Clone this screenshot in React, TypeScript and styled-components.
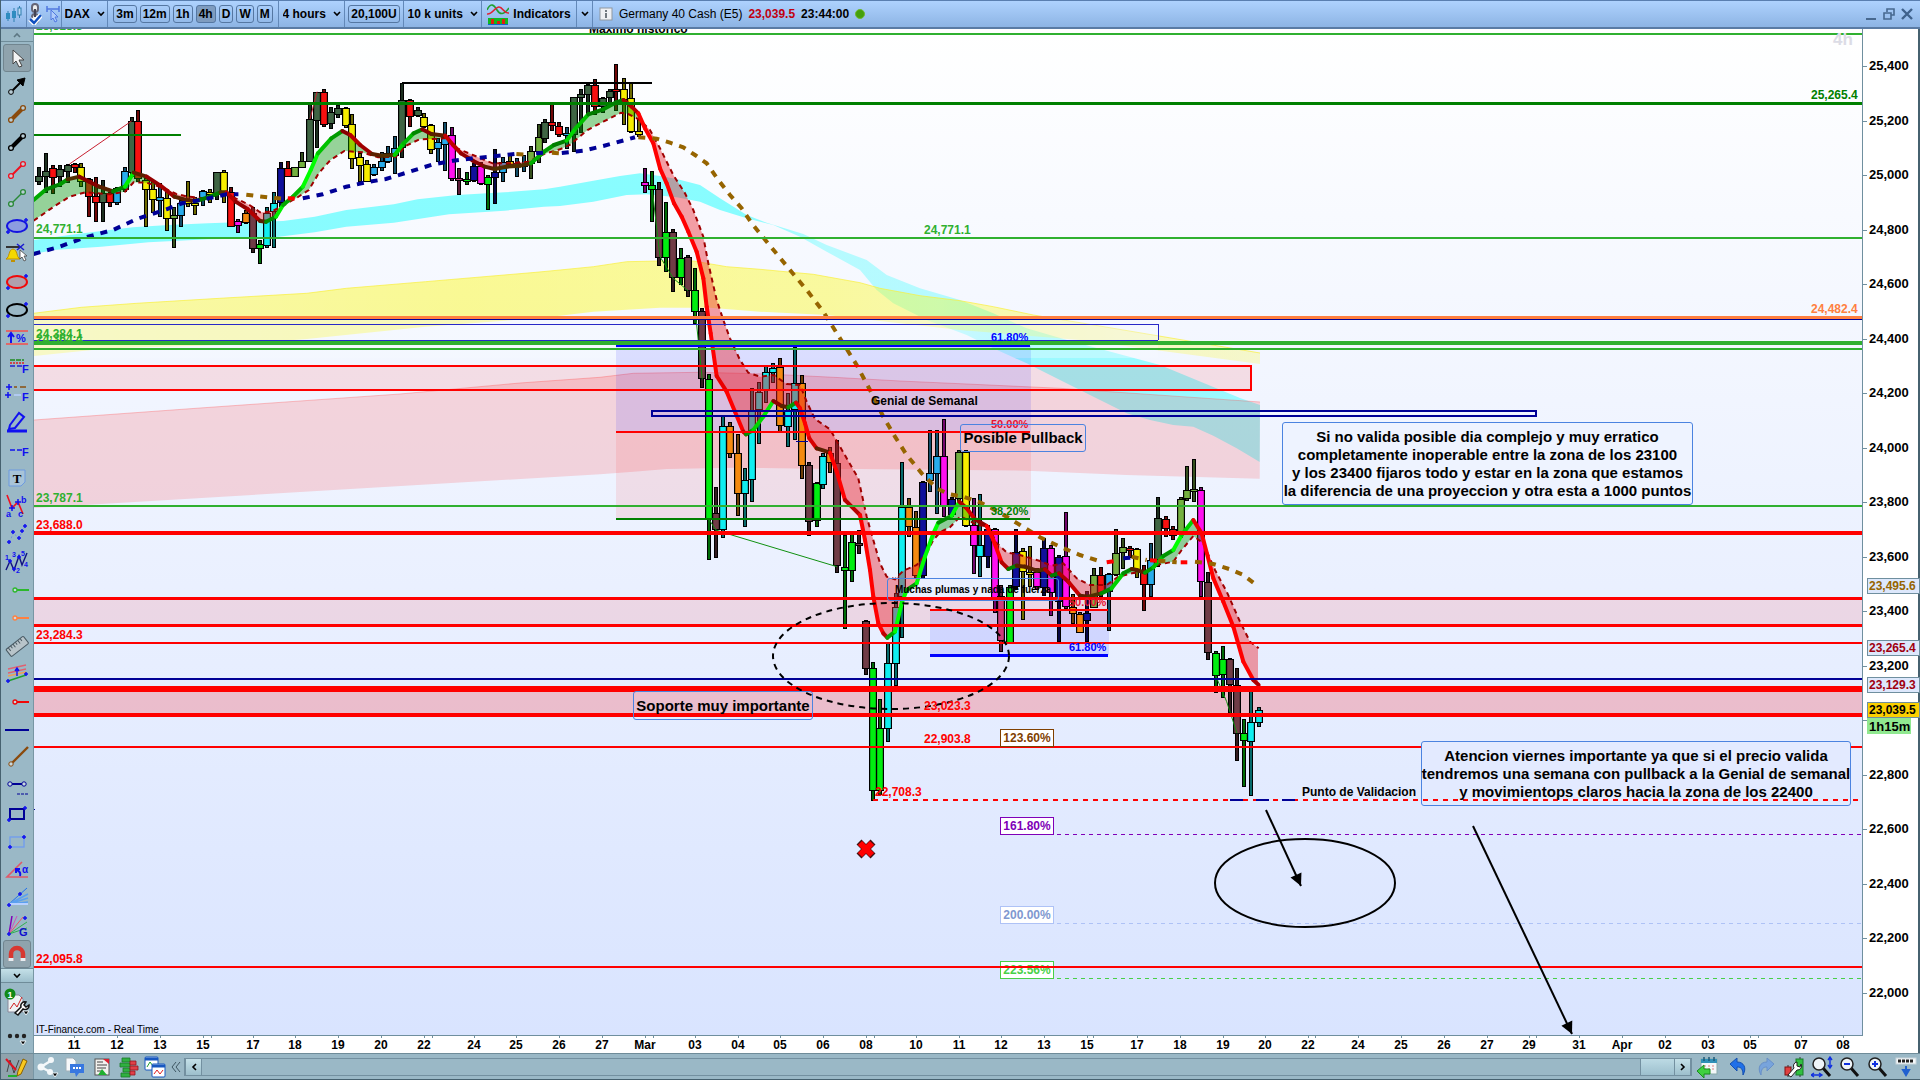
import React from "react";
import styled, { createGlobalStyle } from "styled-components";

const sans = '"Liberation Sans", Arial, Helvetica, sans-serif';

const GlobalStyle = createGlobalStyle`
  html, body, #root { height: 100%; }
  body { margin: 0; overflow: hidden; background: #9ab8c6; font-family: ${sans}; color: #000; }
  *, *::before, *::after { box-sizing: border-box; }
  button, select { font-family: inherit; color: inherit; margin: 0; }
`;

/* ---------- layout ---------- */

const App = styled.div`
  display: grid;
  grid-template-rows: 29px minmax(0, 1fr) 27px;
  height: 100vh;
  border-left: 1px solid #46616f;
`;

const TopBar = styled.header`
  display: flex;
  align-items: stretch;
  border-top: 1px solid #5a7fb0;
  border-bottom: 2px solid #5a7ba4;
  background: linear-gradient(#aed2fe, #8db4e4);
  font-size: 12px;
`;

const Cell = styled.div<{ $w: number }>`
  display: flex;
  flex: none;
  align-items: center;
  justify-content: center;
  gap: 4px;
  width: ${(p) => p.$w}px;
  border-right: 1px solid #6288b8;
  white-space: nowrap;
`;

const Frames = styled(Cell)`
  gap: 3px;
`;

const FlatButton = styled.button`
  display: flex;
  align-items: center;
  justify-content: center;
  gap: 4px;
  padding: 0;
  border: 0;
  background: none;
  font-size: 12px;
  font-weight: 700;
`;

const FrameButton = styled(FlatButton)<{ $on?: boolean }>`
  height: 18px;
  padding: 0 2px;
  border: 1px solid #5577a2;
  border-radius: 3px;
  background: ${(p) => (p.$on ? "#7f9cbf" : "transparent")};
`;

const Picker = styled.label`
  display: flex;
  align-items: center;
  gap: 6px;
`;

const PickerSelect = styled.select`
  appearance: none;
  padding: 0;
  border: 0;
  background: none;
  font-size: 12px;
  font-weight: 700;
`;

const Instrument = styled.div`
  display: flex;
  align-items: center;
  gap: 6px;
  flex: 1;
  padding-left: 6px;
  white-space: nowrap;
`;

const Quote = styled.b`
  color: #c00010;
`;

const Dot = styled.span`
  width: 10px;
  height: 10px;
  border: 1px solid #6fb82e;
  border-radius: 50%;
  background: #45a00c;
`;

const WindowButtons = styled.div`
  display: flex;
  align-items: center;
  gap: 6px;
  padding-right: 7px;
`;

const Main = styled.main`
  display: flex;
  min-height: 0;
`;

const ToolColumn = styled.nav`
  display: flex;
  flex-direction: column;
  align-items: center;
  width: 33px;
  border-right: 1px solid #7896a4;
  background: #9ab8c6;
  overflow: hidden;
`;

const StripButton = styled(FlatButton)<{ $raised?: boolean }>`
  width: 100%;
  height: ${(p) => (p.$raised ? 15 : 13)}px;
  flex: none;
  margin-bottom: 2px;
  border: solid #6f8c99;
  border-width: ${(p) => (p.$raised ? "1px 0" : "0 0 1px")};
  background: ${(p) => (p.$raised ? "linear-gradient(#c4e0e8, #9dbfcc)" : "transparent")};
`;

const ToolButton = styled(FlatButton)<{ $on?: boolean }>`
  flex: none;
  width: 28px;
  height: 28px;
  border: 1px solid ${(p) => (p.$on ? "#71858f" : "transparent")};
  border-radius: 3px;
  background: ${(p) => (p.$on ? "#8fa3ad" : "transparent")};
`;

const ExtraTool = styled(FlatButton)`
  flex: none;
  width: 28px;
  height: 34px;
`;

const ChartGrid = styled.section`
  display: grid;
  flex: 1;
  min-width: 0;
  grid-template-columns: minmax(0, 1fr) 58px;
  grid-template-rows: minmax(0, 1fr) 18px;
  background: #fff;
`;

const Canvas = styled.div`
  position: relative;
  min-height: 0;
  overflow: hidden;
  background: linear-gradient(#ffffff, #d9e4ff);
`;

const Drawing = styled.svg`
  display: block;
  width: 100%;
  height: 100%;
  min-height: 0;
  font-family: ${sans};
  font-weight: 700;
  font-size: 12px;
`;

const TimeScale = styled(Drawing)`
  grid-column: 1 / -1;
`;

const Note = styled.p<{ $x: number; $y: number; $w: number; $h: number; $size: number; $bg?: string }>`
  position: absolute;
  left: ${(p) => p.$x - 34}px;
  top: ${(p) => p.$y - 29}px;
  width: ${(p) => p.$w}px;
  height: ${(p) => p.$h}px;
  display: flex;
  align-items: center;
  justify-content: center;
  margin: 0;
  border: 1px solid #4b83e0;
  border-radius: 3px;
  background: ${(p) => p.$bg || "transparent"};
  font-size: ${(p) => p.$size}px;
  font-weight: 700;
  line-height: 18px;
  text-align: center;
  white-space: pre;
`;

const BottomBar = styled.footer`
  display: flex;
  align-items: center;
  border-top: 1px solid #6f8c99;
  border-bottom: 1px solid #46616f;
  background: #9ab8c6;
`;

const DrawToggle = styled(FlatButton)`
  width: 33px;
  height: 100%;
  border-right: 1px solid #7896a4;
  background: #8fa3ad;
`;

const BarButton = styled(FlatButton)<{ $w: number }>`
  flex: none;
  width: ${(p) => p.$w}px;
  height: 24px;
`;

const Scroll = styled.div`
  display: flex;
  flex: 1;
  justify-content: space-between;
  height: 18px;
  border: 1px solid #7390a0;
`;

const ScrollEnd = styled.div`
  display: flex;
`;

const ScrollButton = styled(FlatButton)`
  width: 17px;
  border: solid #7390a0;
  border-width: 0 1px;
  background: linear-gradient(#c4e0e8, #9dbfcc);
`;

const Thumb = styled.div`
  width: 34px;
  border-left: 1px solid #7390a0;
  background: linear-gradient(#bcdae4, #9dc0ce);
`;

/* ---------- chart data ---------- */

type P = [number, number];
type Grid = (s: string) => P[];

const grid =
  (ox: number, oy: number, sx: number, sy: number): Grid =>
  (s) =>
    s
      .trim()
      .split(/\s+/)
      .map((q) => {
        const [x, y] = q.split(",").map(Number);
        return [ox + x * sx, oy + y * sy] as P;
      });

const A = grid(30, 20, 1 / 2.529, 1 / 3);
const B = grid(560, 40, 1 / 3, 1 / 3);
const C = grid(600, 300, 1 / 3, 1 / 3);
const D = grid(860, 400, 1 / 3, 1 / 3);
const Z = grid(0, 0, 1, 1);

const palette: Record<string, string> = {
  g: "#3f6544", r: "#f81010", y: "#f6ee00", b: "#28acec", n: "#10109c",
  G: "#00ee10", m: "#ff10f0", c: "#10eef0", o: "#f48a10", w: "#703c46",
  l: "#74b040", p: "#cc3c7c",
};

const candleSets: [Grid, string][] = [
  [A, `23 440 468 487 495 g;41 400 452 472 518 g;59 435 445 475 522 r;77 435 448 472 500 g;95 432 435 455 490 g;113 430 433 445 460 r;130 428 440 487 500 y;148 475 478 532 592 r;167 470 527 549 607 r;185 480 520 549 605 g;203 515 520 549 560 r;221 500 505 550 555 b;239 442 452 510 515 b;257 290 303 458 470 g;273 270 302 478 485 r;294 475 480 510 622 y;312 480 508 540 578 y;329 490 530 542 590 b;347 510 533 598 632 y;365 562 584 598 683 l;383 540 548 588 622 b;400 482 540 552 562 y;418 530 549 558 584 y;438 510 513 535 558 b;456 508 515 524 550 y;473 455 455 525 540 g;491 450 455 515 550 y;509 502 515 622 622 r;527 597 603 618 640 m;545 570 580 608 613 o;565 560 580 688 700 w;582 660 672 688 731 G;600 562 580 677 685 c;617 517 550 575 685 c;635 425 444 550 560 n;653 422 444 472 472 r;671 440 440 472 472 l;689 397 422 445 445 l;708 252 297 427 427 g;726 215 215 302 385 g;744 208 217 315 320 r;762 260 277 312 327 g;780 255 263 284 293 g;798 262 263 318 325 y;815 283 313 418 448 y;835 400 410 437 487 y;852 420 433 487 487 y;871 433 440 465 467 b;889 395 422 445 452 b;906 378 400 427 430 b;923 348 385 408 463 b;941 190 240 385 415 g;960 238 240 292 322 r;980 262 270 288 290 g;997 280 290 320 325 y;1015 313 315 390 402 y;1033 355 365 388 425 b;1050 307 350 375 452 b;1068 322 345 478 482 m;1086 445 475 483 524 p;1105 457 478 485 495 G;1123 430 437 483 485 n;1141 425 437 493 495 m;1159 465 470 495 569 G;1177 388 455 475 553 n;1195 410 425 458 485 b;1213 405 422 435 445 y;1231 413 428 440 470 b;1249 405 432 440 455 b;1267 378 392 432 478 l;1286 313 352 395 430 l;1303 298 305 357 370 g;1321 252 305 317 332 r;1339 305 318 345 352 r;1357 322 338 345 388 b;1376 230 232 345 395 g;1394 208 222 235 340 g;1412 192 195 225 285 g;1430 178 195 260 285 r;1448 230 235 260 280 g;1466 208 212 235 250 g;1483 133 207 214 272 r;1501 175 207 240 315 y;1521 190 235 337 340 y;1539 298 332 345 350 y`],
  [B, `255 385 425 437 460 m;277 393 435 450 545 G;297 427 447 655 677 w;319 487 575 655 697 G;340 568 575 715 755 w;364 625 655 713 735 G;384 645 650 752 770 w;406 685 750 815 853 G;427 805 813 1018 1045 w`],
  [C, `328 222 237 660 780 G;348 562 640 690 775 w;370 345 377 690 715 c;391 365 377 462 475 o;415 403 458 583 647 o;435 505 540 583 682 c;457 265 330 540 605 c;477 247 275 330 432 c;498 197 215 273 308 c;519 190 203 219 250 c;541 175 200 378 395 o;565 280 330 380 440 c;585 140 250 330 420 c;607 225 250 498 538 o;628 487 495 665 708 w;650 545 550 662 680 G;670 460 467 555 568 c;690 442 460 490 520 o;711 420 488 798 820 w;736 705 802 813 988 G;757 697 725 812 845 G;777 690 730 736 763 w`],
  [D, `19 660 662 808 826 w;40 787 803 1172 1202 G;61 897 985 1172 1185 G;83 730 790 987 1025 c;107 580 620 792 858 c;126 185 322 590 713 c;148 295 320 382 410 o;169 333 380 527 533 o;190 243 247 527 538 n;210 90 218 243 277 b;231 90 167 222 342 b;252 57 168 322 350 m;277 290 297 345 350 n;298 150 155 297 310 l;319 150 155 378 380 y;341 295 375 438 523 m;361 283 435 470 530 c;383 375 388 470 505 n;404 385 388 595 640 m;423 555 588 723 755 p;449 556 560 730 733 G;468 388 457 560 568 n;490 445 452 517 660 y;510 438 517 524 562 y;532 505 517 560 570 m;553 415 445 565 587 n;574 435 445 580 647 m;597 465 470 605 725 n;618 337 468 622 628 m;640 583 620 643 672 o;661 635 642 700 700 o;682 573 640 662 725 n;703 505 525 625 625 l;724 500 525 580 590 r;746 520 522 575 692 b;768 388 458 525 527 l;789 415 440 460 508 l;811 438 443 450 475 r;832 445 447 510 533 y;852 495 515 555 632 r;874 430 480 555 592 b;895 290 355 480 500 g;919 348 357 388 412 r;939 378 388 408 420 r;962 290 297 395 415 l;981 198 270 298 302 l;1002 178 268 274 305 l;1024 262 270 547 592 m;1045 517 547 758 780 w;1067 752 760 827 878 G;1089 738 778 825 895 G;1111 775 778 855 940 w;1131 805 855 1002 1082 w;1152 957 1000 1022 1160 G;1174 870 967 1027 1187 c;1196 922 930 968 980 c`],
];

const candles = candleSets.flatMap(([g, s]) =>
  s.split(";").map((row) => {
    const [x, hi, top, bot, lo, c] = row.split(" ");
    const points = g(`${x},${hi} ${x},${top} ${x},${bot} ${x},${lo}`);
    const y = points.map((p) => Math.round(p[1]));
    return { x: Math.round(points[0][0]), hi: y[0], top: y[1], bot: y[2], lo: y[3], fill: palette[c] };
  })
);

const average: P[] = [
  ...A("9,540 41,508 77,492 95,478 125,470 150,485 175,500 210,514 240,500 262,458 295,470 330,497 365,530 395,540 420,543 450,532 482,517 497,517 520,545 550,567 582,603 597,605 622,590 640,555 665,530 690,500 710,450 728,400 762,355 790,333 810,345 835,375 865,402 890,407 922,405 945,370 970,340 992,328 1015,342 1050,347 1070,375 1090,400 1120,422 1150,440 1175,447 1205,440 1240,437 1267,430 1300,395 1325,375 1357,362 1380,325 1412,283 1450,268 1483,247 1501,240"),
  ...B("215,200 235,220 255,265 280,310 300,385 320,430 342,490 365,530 385,575 410,635 430,715 440,800 452,880 470,1008"),
  ...C("380,275 405,335 430,395 438,403 460,390 490,350 520,303 545,318 565,322 588,308 600,325 615,370 628,415 650,445 690,458 710,515 735,600 780,645 795,720 810,810 820,890 835,970 850,1000 862,1013 885,995 905,910 920,870 950,850 975,770 1000,700 1015,668 1055,647"),
  ...D("298,305 320,325 345,358 380,378 400,420 425,487 445,507 470,497 495,500 530,512 555,508 575,527 597,520 625,545 660,587 685,590 724,580 755,565 790,520 815,507 830,510 855,518 880,502 910,468 940,450 965,405 1000,360 1025,400 1060,535 1090,605 1120,680 1150,785 1180,840 1196,855"),
];

const signal: P[] = [
  ...A("9,602 60,560 100,530 140,517 200,523 240,515 262,487 295,488 340,505 370,522 400,530 440,535 480,520 497,520 520,535 555,555 582,577 610,575 640,557 675,533 705,510 730,460 760,420 795,393 840,397 880,412 925,410 950,378 985,358 1020,357 1050,355 1080,385 1120,405 1170,430 1205,430 1260,425 1300,402 1340,388 1365,375 1410,330 1450,305 1495,278"),
  ...B("205,222 240,240 270,270 300,325 340,405 375,460 400,510 430,590 445,670 470,780 490,840 510,895 540,960 565,998 600,1010 640,1005 680,1032 720,1035 740,1085"),
  ...C("645,357 690,388 720,440 775,535 800,650 820,720 840,790 860,830 885,838 910,812 950,795 980,760 1000,720 1020,697 1050,682"),
  ...D("300,350 320,358 350,375 385,378 410,430 440,457 480,465 540,483 575,497 610,490 650,535 690,555 740,555 775,530 815,520 855,515 890,495 940,485 965,450 1000,408 1030,430 1065,510 1100,575 1140,665 1170,725 1196,745"),
];

const heightAt = (line: P[], x: number) => {
  for (let i = 1; i < line.length; i++) {
    if (x <= line[i][0]) {
      const [a, b] = [line[i - 1], line[i]];
      return a[1] + ((x - a[0]) / (b[0] - a[0] || 1)) * (b[1] - a[1]);
    }
  }
  return line[line.length - 1][1];
};

const pts = (list: P[]) => list.map((p) => p.map((v) => v.toFixed(1)).join(",")).join(" ");

const clouds = (() => {
  const out: { up: boolean; points: string }[] = [];
  let top: P[] = [];
  let low: P[] = [];
  let up = true;
  const flush = () => {
    if (top.length > 1) out.push({ up, points: pts([...top, ...low.reverse()]) });
    top = [];
    low = [];
  };
  for (let x = 34; x <= 1258; x += 2) {
    const a = heightAt(average, x);
    const s = heightAt(signal, x);
    const nowUp = a < s;
    if (nowUp !== up) {
      flush();
      up = nowUp;
    }
    top.push([x, a]);
    low.push([x, s]);
  }
  flush();
  return out;
})();

const slopeColor = (a: P, b: P) => {
  const slope = (b[1] - a[1]) / (b[0] - a[0] || 1);
  const t = Math.min(1, Math.abs(slope) / 1.8);
  if (slope < -0.3) return `rgb(0, ${Math.round(95 + 160 * t)}, 0)`;
  if (slope > 0.4) return `rgb(${Math.round(90 + 165 * t)}, 0, 0)`;
  return slope > 0 ? "#5a2000" : "#503000";
};

const band = (upper: P[], lower: P[]) => pts([...upper, ...[...lower].reverse()]);

const cyanUpper = [
  ...A("9,660 100,645 180,633 260,622 350,615 450,610 560,605 640,603 720,590 800,570 920,553 980,538 1080,525 1200,517 1300,508"),
  ...B("0,440 100,422 180,408 240,400 300,408 350,417 420,435 480,475 560,525 620,548 730,582 800,615 920,660 980,705 1080,745 1200,780 1300,820 1400,865"),
  ...Z("1067,340 1160,365 1240,398 1260,405"),
];
const cyanLower = [
  ...A("9,702 60,690 180,680 300,667 450,658 600,655 720,637 800,620 920,608 1060,583 1200,572 1300,560"),
  ...B("0,498 100,485 200,465 260,463 350,472 420,485 480,510 560,535 640,555 720,590 800,635 900,690 950,750 1000,790 1100,840 1220,885 1300,925 1400,970 1500,1020 1560,1050"),
  ...D("720,0 800,40 870,60 940,75 1000,80 1060,107 1130,145 1199,186"),
];
const yellowUpper = [
  ...A("9,880 130,862 270,850 480,835 700,820 800,805 1000,785 1280,757"),
  ...B("0,690 100,680 200,665 300,663 400,663 500,680 600,688 760,703 900,728 960,745 1080,767 1200,782 1300,800 1420,825 1560,848"),
  ...Z("1260,353"),
];
const yellowLower = [
  ...A("9,1008 200,985 500,975 700,957 1000,920 1200,902"),
  ...B("0,827 100,815 300,803 450,803 600,815 800,825 980,845 1200,870 1560,900"),
  ...Z("1260,364"),
];
const pinkUpper = [...Z("34,420 200,408 400,394 520,383"), ...C("0,232 100,220 300,217 500,222 700,232 900,243 1100,252 1380,265"), ...Z("1260,402")];
const pinkLower = [...Z("34,508 300,492"), ...C("0,523 100,515 200,507 400,503 700,507"), ...D("0,207 500,212 800,225 1199,236")];

const NAVY = "#000096";
const BROWN = "#966400";
const RED = "#ff0000";

const trend: [string, P[]][] = [
  [NAVY, A("9,702 70,682 140,652 210,630 270,597 345,568 385,550 440,538 497,523 527,523")],
  [BROWN, A("547,524 600,532 640,536")],
  [RED, A("652,535 675,536")],
  [NAVY, A("690,535 740,523 800,500 850,487 900,477 960,455 1020,433 1070,422 1120,415 1180,408 1225,402")],
  [BROWN, A("1230,402 1260,404")],
  [NAVY, A("1280,400 1300,398")],
  [BROWN, A("1320,398 1340,400")],
  [NAVY, A("1345,399 1400,392 1450,378 1530,352")],
  [BROWN, [...B("235,292 290,296 330,308 370,322 405,345 440,370 475,420 510,465 545,505 575,550 620,605 690,690 740,750 790,815 840,895 890,975 930,1050 970,1130"), ...C("885,410 920,465 965,520 1010,565 1045,582 1090,590 1140,607 1170,622"), ...D("440,350 480,375 540,412 600,440 660,465 730,487")]],
  [RED, D("740,487 765,483")],
  [NAVY, D("790,475 812,473")],
  [BROWN, D("815,470 860,480")],
  [RED, D("870,481 892,482")],
  [BROWN, D("895,482 950,487")],
  [RED, D("962,487 982,487")],
  [BROWN, D("1005,485 1060,492 1110,508 1150,525 1180,548")],
];

/* y, thickness, colour */
const levels: [number, number, string][] = [
  [34, 2, "#30b030"], [103, 3, "#008000"], [238, 2, "#30b030"], [317, 3, "#ff7f40"], [319, 1, NAVY],
  [343, 4, "#30b030"], [349, 2, "#30b030"], [506, 2, "#30b030"], [533, 4, RED], [598, 3, RED],
  [625, 3, RED], [643, 2, RED], [679, 2, NAVY], [689, 6, RED], [715, 4, RED], [747, 2, RED], [967, 2, RED],
];

/* text, x, baseline, colour, size */
const labels: [string, number, number, string, number?][] = [
  ["25,518.3", 36, 30, "#30b030"],
  ["Maximo historico", 589, 33, "#000"],
  ["25,265.4", 1811, 99, "#008000"],
  ["24,771.1", 36, 233, "#30b030"],
  ["24,771.1", 924, 234, "#30b030"],
  ["24,482.4", 1811, 313, "#ff7f40"],
  ["24,364.4", 36, 343, "#30b030"],
  ["24,384.1", 36, 338, "#30b030"],
  ["61.80%", 991, 341, "#0000ff", 11],
  ["Genial de Semanal", 871, 405, "#000"],
  ["50.00%", 991, 428, "#e81030", 11],
  ["38.20%", 991, 515, "#008000", 11],
  ["23,787.1", 36, 502, "#30b030"],
  ["23,688.0", 36, 529, RED],
  ["50.00%", 1069, 606, "#e81030", 11],
  ["61.80%", 1069, 651, "#0000ff", 11],
  ["23,284.3", 36, 639, RED],
  ["23,023.3", 924, 710, RED],
  ["22,903.8", 924, 743, RED],
  ["22,708.3", 875, 796, RED],
  ["Punto de Validacion", 1302, 796, "#000"],
  ["22,095.8", 36, 963, RED],
];

/* text, top, colour, text colour */
const extensions: [string, number, string, string][] = [
  ["123.60%", 729, "#804000", "#804000"],
  ["161.80%", 817, "#8000b8", "#8000b8"],
  ["200.00%", 906, "#aec2f6", "#8098d0"],
  ["223.56%", 961, "#48d048", "#48d048"],
];

const prices = [25400, 25200, 25000, 24800, 24600, 24400, 24200, 24000, 23800, 23600, 23400, 23200, 23000, 22800, 22600, 22400, 22200, 22000];
const priceY = (p: number) => Math.round(66 + ((25400 - p) * 927) / 3400);

const days: [string, number][] = [
  ["11", 74], ["12", 117], ["13", 160], ["15", 203], ["17", 253], ["18", 295], ["19", 338], ["20", 381], ["22", 424],
  ["24", 474], ["25", 516], ["26", 559], ["27", 602], ["Mar", 645], ["03", 695], ["04", 738], ["05", 780], ["06", 823],
  ["08", 866], ["10", 916], ["11", 959], ["12", 1001], ["13", 1044], ["15", 1087], ["17", 1137], ["18", 1180], ["19", 1223],
  ["20", 1265], ["22", 1308], ["24", 1358], ["25", 1401], ["26", 1444], ["27", 1487], ["29", 1529], ["31", 1579],
  ["Apr", 1622], ["02", 1665], ["03", 1708], ["05", 1750], ["07", 1801], ["08", 1843],
];
const weekBreaks = [211, 432, 653, 874, 1093, 1315, 1536, 1758];

/* ---------- icons ---------- */

const BLUE = "#1a1ad0";

const Plus = ({ x, y, c = "#1010f0", r = 3 }: { x: number; y: number; c?: string; r?: number }) => (
  <path d={`M${x - r} ${y}h${2 * r}M${x} ${y - r}v${2 * r}`} stroke={c} strokeWidth="1.5" fill="none" />
);

const Icon = ({ children, w = 24, h = 24 }: { children: React.ReactNode; w?: number; h?: number }) => (
  <svg width={w} height={h} viewBox={`0 0 ${w} ${h}`} fill="none" aria-hidden="true" fontFamily={sans} fontWeight="700">
    {children}
  </svg>
);

const Chevron = ({ up }: { up?: boolean }) => (
  <Icon w={8} h={6}>
    <path d={up ? "M1 5l3-3 3 3" : "M1 1l3 3 3-3"} stroke={up ? "#5d7783" : "#000"} strokeWidth="1.6" />
  </Icon>
);

const Segment = ({ c, w = 2 }: { c: string; w?: number }) => (
  <Icon>
    <path d="M7 17L17 7" stroke={c} strokeWidth={w} />
    <circle cx="6" cy="18" r="2.4" stroke={c} strokeWidth="1.3" fill="#b9cdd6" />
    <circle cx="18" cy="6" r="2.4" stroke={c} strokeWidth="1.3" fill="#b9cdd6" />
  </Icon>
);

const Oval = ({ c, fill }: { c: string; fill: string }) => (
  <Icon>
    <ellipse cx="12" cy="12" rx="10" ry="6" stroke={c} strokeWidth="2" fill={fill} />
    <Plus x={3} y={18} r={2} />
    <Plus x={21} y={6} r={2} />
  </Icon>
);

const Ray = ({ c }: { c: string }) => (
  <Icon>
    <path d="M12 12h12" stroke={c} strokeWidth="2" />
    <circle cx="10" cy="12" r="2" stroke={c} strokeWidth="1.3" fill="#c8d8df" />
  </Icon>
);

const tools: [string, React.ReactNode][] = [
  ["Cursor", <Icon><path d="M8 4v14l3-3 3 6 3-1-3-6h5z" fill="#f4f4f4" stroke="#444" /></Icon>],
  ["Arrow", <Icon><path d="M6 18L16 8" stroke="#000" strokeWidth="2" /><path d="M12 6l8-2-2 8z" fill="#000" stroke="#000" /><circle cx="6" cy="18" r="2.4" stroke="#000" fill="#b9cdd6" /></Icon>],
  ["Brown segment", <Segment c="#8a4a0c" w={4} />],
  ["Black segment", <Segment c="#000" w={4} />],
  ["Red segment", <Segment c="#f01020" />],
  ["Green segment", <Segment c="#2a8a38" w={1.5} />],
  ["Blue ellipse", <Oval c="#1414e0" fill="#8c9ce0" />],
  ["Alert", <Icon><path d="M1 5h15" stroke="#333" strokeWidth="2" /><path d="M1 17c4-2 2-9 7-10 5 1 3 8 7 10z" fill="#f4d800" stroke="#c09000" /><path d="M6 19h4" stroke="#c09000" strokeWidth="2" /><path d="M12 2l7 6M19 2l-7 6" stroke={BLUE} strokeWidth="1.5" /><path d="M15 8v9l2-2 2 4 2-1-2-4h3z" fill="#fff" stroke="#444" strokeWidth=".8" /></Icon>],
  ["Red ellipse", <Oval c="#f00808" fill="#b0a0ac" />],
  ["Black ellipse", <Oval c="#000" fill="none" />],
  ["Percent", <Icon><path d="M1 5h22M1 18h22" stroke="#e06868" strokeWidth="2" /><path d="M6 17V8M3 11l3-4 3 4" stroke="#1010f0" strokeWidth="2" /><text x="11" y="16" fontSize="11" fill="#1010f0">%</text></Icon>],
  ["Fibonacci bands", <Icon><path d="M5 6h14" stroke="#1e8a1e" strokeDasharray="5 1" strokeWidth="1.4" /><path d="M5 9h14" stroke="#e02020" strokeDasharray="2 1" strokeWidth="1.4" /><path d="M5 12h14" stroke="#2020d0" strokeDasharray="5 2" strokeWidth="1.4" /><text x="17" y="19" fontSize="11" fill="#1010f0">F</text></Icon>],
  ["Fibonacci extension", <Icon><Plus x={4} y={5} /><Plus x={3} y={13} /><path d="M9 5h13" stroke="#8a5010" strokeWidth="1.5" strokeDasharray="3 3 6 2" /><path d="M9 13h7" stroke="#b8d0ff" strokeWidth="1.5" /><text x="17" y="19" fontSize="11" fill="#1010f0">F</text></Icon>],
  ["Highlighter", <Icon><path d="M5 15L14 3l5 4-9 11-6 1z" stroke="#1010f0" strokeWidth="2" /><path d="M2 21h20" stroke="#1010f0" strokeWidth="3" /></Icon>],
  ["Fibonacci level", <Icon><path d="M5 12h12" stroke="#1010f0" strokeWidth="1.5" strokeDasharray="5 2" /><text x="17" y="18" fontSize="11" fill="#1010f0">F</text></Icon>],
  ["Text", <Icon><path d="M4 4h16v12l-4 4H4z" stroke="#6d9ae0" fill="#a8c4d8" /><text x="12" y="17" fontSize="13" textAnchor="middle" fontFamily="Liberation Serif, serif" fill="#000">T</text></Icon>],
  ["ABC wave", <Icon><path d="M2 1l5 13 6-6 5 12" stroke="#f01020" strokeWidth="1.6" /><Plus x={7} y={14} /><Plus x={13} y={8} /><text x="1" y="23" fontSize="9" fill="#1010f0">a</text><text x="16" y="9" fontSize="9" fill="#1010f0">b</text><text x="13" y="23" fontSize="9" fill="#1010f0">c</text></Icon>],
  ["Pivot marks", <Icon><path d="M5 20l3-9 6 5 6-12" stroke="#7090e0" strokeDasharray="2 2" /><Plus x={4} y={20} r={2} /><Plus x={8} y={10} r={2} /><Plus x={14} y={16} r={2} /><Plus x={20} y={4} r={2} /><Plus x={17} y={9} r={2} /></Icon>],
  ["Elliott wave", <Icon><path d="M1 20l4-9 4 9 5-14 3 9 5-12" stroke="#101080" strokeWidth="1.4" /><Plus x={5} y={11} r={2} /><Plus x={14} y={7} r={2} /><Plus x={9} y={19} r={2} /><text x="0" y="10" fontSize="7" fill="#1010f0">1</text><text x="7" y="7" fontSize="7" fill="#1010f0">3</text><text x="16" y="6" fontSize="7" fill="#1010f0">5</text><text x="19" y="17" fontSize="7" fill="#1010f0">4</text><text x="11" y="23" fontSize="7" fill="#1010f0">2</text></Icon>],
  ["Green ray", <Ray c="#2cb82c" />],
  ["Orange ray", <Ray c="#ff8040" />],
  ["Ruler", <Icon><g transform="rotate(-38 12 12)"><rect x="1" y="8" width="22" height="9" rx="1" fill="#b8c4ca" stroke="#4a5a64" /><path d="M4 8v4M7 8v3M10 8v4M13 8v3M16 8v4M19 8v3" stroke="#4a5a64" /></g></Icon>],
  ["Channel", <Icon><path d="M3 7l18-4M3 11l18-4" stroke="#e06070" strokeWidth="1.3" /><path d="M3 14l18-4" stroke="#f0a050" strokeWidth="1.3" /><path d="M3 19l18-6" stroke="#20a030" strokeWidth="1.5" /><path d="M12 14V7M10 9l2-3 2 3" stroke="#1010f0" strokeWidth="1.4" /><Plus x={3} y={19} r={2} /><Plus x={21} y={12} r={2} /></Icon>],
  ["Red ray", <Ray c="#f00808" />],
  ["Horizontal line", <Icon><path d="M0 12h24" stroke={NAVY} strokeWidth="2" /></Icon>],
  ["Brown ray", <Icon><path d="M7 17L23 1" stroke="#8a4a0c" strokeWidth="2.4" /><circle cx="6" cy="18" r="2.2" stroke="#8a4a0c" fill="#c8d8df" /></Icon>],
  ["Dashed segment", <Icon><path d="M7 10h10" stroke={NAVY} strokeWidth="2" /><circle cx="5" cy="10" r="2.2" stroke={NAVY} fill="#c8d8df" /><circle cx="19" cy="10" r="2.2" stroke={NAVY} fill="#c8d8df" /><path d="M12 20h12" stroke={NAVY} strokeDasharray="3 1" /></Icon>],
  ["Navy rectangle", <Icon><rect x="5" y="7" width="14" height="10" stroke={NAVY} strokeWidth="2" /><Plus x={4} y={18} r={2} /><Plus x={20} y={6} r={2} /></Icon>],
  ["Light rectangle", <Icon><rect x="5" y="7" width="14" height="10" stroke="#6f9cf0" strokeWidth="1.3" /><Plus x={5} y={17} r={2} /><Plus x={19} y={7} r={2} /></Icon>],
  ["Angle", <Icon><path d="M17 4L2 19h21" stroke="#e05868" strokeWidth="1.6" /><path d="M15 18c1-3-1-5-3-6M11 15v-4h4" stroke="#1010f0" strokeWidth="2" /><text x="17" y="15" fontSize="10" fill="#1010f0">α</text></Icon>],
  ["Fan", <Icon><path d="M4 18L22 2" stroke="#2070f0" /><path d="M4 18L23 8M4 18l19-6M4 18l19-2" stroke="#5aa0f0" strokeWidth="1.6" /><path d="M4 18h19" stroke="#b8d0ff" strokeWidth="2" /><Plus x={4} y={19} r={2} /><Plus x={15} y={8} r={2} /></Icon>],
  ["Gann fan", <Icon><path d="M4 20L7 2" stroke="#8000b8" strokeWidth="1.5" /><path d="M4 20L12 2" stroke="#d050c0" /><path d="M4 20L18 3" stroke="#f05060" /><path d="M4 20L22 8M4 20l18-6" stroke="#30b050" /><Plus x={4} y={20} r={2} /><Plus x={20} y={4} r={2} /><text x="14" y="22" fontSize="11" fill="#1010d0">G</text></Icon>],
  ["Magnet", <Icon><path d="M6 19v-7a6 6 0 0 1 12 0v7" stroke="#d83830" strokeWidth="4.5" /><path d="M3.5 17.5h5M15.5 17.5h5" stroke="#e8eef2" strokeWidth="3" /></Icon>],
];

const Corner = ({ x, y }: { x: number; y: number }) => (
  <path d={`M${x - 3} ${y - 2}h6l-3 4z`} fill="#000" stroke="#eef4f7" strokeWidth="1" />
);

const Lens = ({ children }: { children: React.ReactNode }) => (
  <Icon w={22} h={22}>
    <path d="M12 12l7 8" stroke="#111" strokeWidth="3" />
    <circle cx="8" cy="8" r="6" fill="#eef4f8" stroke="#222" strokeWidth="1.5" />
    {children}
  </Icon>
);

/* ---------- view ---------- */

const Arrow = ({ from, to }: { from: P; to: P }) => {
  const angle = (Math.atan2(to[1] - from[1], to[0] - from[0]) * 180) / Math.PI;
  return (
    <g stroke="#000" strokeWidth="2">
      <path d={`M${from.join(" ")}L${to.join(" ")}`} />
      <path d="M0 0l-12-6v12z" stroke="none" fill="#000" transform={`translate(${to.join(" ")}) rotate(${angle})`} />
    </g>
  );
};

const Chart = () => (
  <Drawing viewBox="34 29 1828 1006" preserveAspectRatio="none" role="img" aria-label="DAX 4 hour candlestick chart">
    <defs>
      <linearGradient id="cyanFade" gradientUnits="userSpaceOnUse" x1="34" y1="0" x2="1260" y2="0">
        <stop offset="0" stopColor="#00ffff" stopOpacity=".45" />
        <stop offset=".58" stopColor="#00ffff" stopOpacity=".45" />
        <stop offset=".64" stopColor="#00ffff" stopOpacity=".26" />
        <stop offset=".74" stopColor="#00ffff" stopOpacity=".26" />
        <stop offset=".8" stopColor="#00ffff" stopOpacity=".36" />
        <stop offset="1" stopColor="#00ffff" stopOpacity=".36" />
      </linearGradient>
      <linearGradient id="yellowFade" gradientUnits="userSpaceOnUse" x1="34" y1="0" x2="1260" y2="0">
        <stop offset="0" stopColor="#fffa00" stopOpacity=".34" />
        <stop offset=".35" stopColor="#fffa00" stopOpacity=".42" />
        <stop offset=".65" stopColor="#fffa00" stopOpacity=".38" />
        <stop offset="1" stopColor="#fffa00" stopOpacity=".2" />
      </linearGradient>
    </defs>
    <polygon points={band(cyanUpper, cyanLower)} fill="url(#cyanFade)" />
    <polygon points={band(yellowUpper, yellowLower)} fill="url(#yellowFade)" />
    <polyline points={pts(yellowUpper)} fill="none" stroke="rgba(250,240,60,.7)" />
    <rect x="34" y="320" width="1124" height="38" fill="rgba(245,248,255,.35)" />
    <polygon points={band(pinkUpper, pinkLower)} fill="rgba(255,50,50,.17)" />
    <polyline points={pts(pinkUpper)} fill="none" stroke="rgba(255,90,90,.35)" />

    <rect x="34" y="366" width="1217" height="24" fill="rgba(255,0,0,.1)" />
    <rect x="616" y="346" width="415" height="86" fill="rgba(0,0,255,.1)" />
    <rect x="616" y="432" width="415" height="86" fill="rgba(255,0,0,.09)" />
    <rect x="930" y="610" width="179" height="45" fill="rgba(0,0,255,.1)" />
    <rect x="34" y="598" width="1828" height="27" fill="rgba(255,0,0,.1)" />
    <rect x="34" y="689" width="1828" height="26" fill="rgba(255,0,0,.2)" />

    <g shapeRendering="crispEdges">
      {candles.map((c) => (
        <g key={`${c.x}-${c.hi}`}>
          <rect x={c.x - 2} y={c.hi} width="4" height={c.lo - c.hi} fill="#000" />
          <rect x={c.x - 1} y={c.hi + 1} width="2" height={Math.max(0, c.lo - c.hi - 2)} fill={c.fill} opacity=".45" />
          <rect x={c.x - 4} y={c.top} width="8" height={Math.max(3, c.bot - c.top)} fill="#000" />
          <rect x={c.x - 3} y={c.top + 1} width="6" height={Math.max(1, c.bot - c.top - 2)} fill={c.fill} opacity=".8" />
          <rect x={c.x - 2} y={c.top + 1} width="4" height={Math.max(1, c.bot - c.top - 2)} fill={c.fill} />
        </g>
      ))}
    </g>

    {clouds.map((c) => (
      <polygon key={c.points} points={c.points} fill={c.up ? "rgba(0,150,0,.4)" : "rgba(235,30,40,.42)"} />
    ))}
    <polyline points={pts(signal)} fill="none" stroke="#a00000" strokeWidth="2" strokeDasharray="5 4" />
    {average.slice(1).map((p, i) => (
      <path key={i} d={`M${average[i].join(" ")}L${p.join(" ")}`} stroke={slopeColor(average[i], p)} strokeWidth="4" strokeLinecap="round" />
    ))}
    {trend.map(([c, line], i) => (
      <polyline key={i} points={pts(line)} fill="none" stroke={c} strokeWidth="4" strokeDasharray="7 7" />
    ))}

    <g fill="none" stroke="#109010">
      <polyline points={pts(B("277,450 300,650 340,715 384,752"))} />
      <polyline points={pts(B("406,815 427,1018"))} />
      <polyline points={pts(C("328,660 348,690 395,705 711,800"))} />
      <polyline points={pts(D("1067,827 1100,905 1131,1000"))} />
    </g>
    <g fill="none" stroke="#c82030">
      <polyline points={pts(A("100,432 257,303"))} />
      <polyline points={pts(A("708,297 726,215"))} />
    </g>

    <g shapeRendering="crispEdges">
      <path d="M34 135h147" stroke="#008000" strokeWidth="2" />
      <path d="M402 83h250" stroke="#000" strokeWidth="2" />
      <path d="M34 324.5h1124M1158.500 324v16M1158 340.500H34" stroke="#2828c8" />
      {levels.map(([y, h, c]) => (
        <rect key={y} x="34" y={y - Math.floor(h / 2)} width="1828" height={h} fill={c} />
      ))}
      <path d="M34 366h1217v24H34" fill="none" stroke={RED} strokeWidth="2" />
      <path d="M616 346h414" stroke="#0000ff" strokeWidth="2" />
      <path d="M616 432h414M930 610h178" stroke={RED} strokeWidth="2" />
      <path d="M616 519h414" stroke="#008000" strokeWidth="2" />
      <path d="M930 655h178" stroke="#0000ff" strokeWidth="3" />
      <path d="M652 411h884v5H652z" fill="none" stroke={NAVY} strokeWidth="2" />
      <path d="M796 441h12M34 809h1" stroke={NAVY} />
      <path d="M873 800h989" stroke={RED} strokeWidth="2" strokeDasharray="5 5" />
      <path d="M1230 800h13M1256 800h13M1282 800h13" stroke={NAVY} strokeWidth="2" />
      <path d="M1057 834.500h805" stroke="#8000b8" strokeDasharray="4 4" />
      <path d="M1057 923.500h805" stroke="#aec2f6" strokeDasharray="4 4" />
      <path d="M1057 978.500h805" stroke="#48d048" strokeDasharray="4 4" />
    </g>

    <ellipse cx="891" cy="656" rx="118" ry="53" fill="none" stroke="#000" strokeWidth="2" strokeDasharray="6 5" />
    <ellipse cx="1305" cy="883" rx="90" ry="44" fill="none" stroke="#000" strokeWidth="2" />
    <Arrow from={[1266, 810]} to={[1301, 886]} />
    <Arrow from={[1473, 826]} to={[1572, 1034]} />
    <path d="M859 842l14 14M873 842l-14 14" stroke="#401010" strokeWidth="7" />
    <path d="M860 843l12 12M872 843l-12 12" stroke={RED} strokeWidth="6" />

    {extensions.map(([t, y, c, ink]) => (
      <g key={t}>
        <rect x="1000.5" y={y + 0.5} width="53" height="17" fill="#fff" stroke={c} />
        <text x="1027" y={y + 13} fill={ink} textAnchor="middle">{t}</text>
      </g>
    ))}
    <rect x="1000" y="966" width="55" height="2" fill={RED} />
    {labels.map(([t, x, y, c, size]) => (
      <text key={t + x + y} x={x} y={y} fill={c} fontSize={size || 12}>{t}</text>
    ))}
    <text x="1833" y="45" fontSize="17" fill="#dcdce6">4h</text>
    <text x="36" y="1033" fontSize="10" fontWeight="400">IT-Finance.com - Real Time</text>
  </Drawing>
);

const PriceTag = ({ y, ink, fill, children, w = 52 }: { y: number; ink: string; fill: string; children: string; w?: number }) => (
  <g>
    <rect x="1867.5" y={y - 7.5} width={w} height="15" fill={fill} stroke="#6f8f9f" />
    <text x="1869" y={y + 4} fill={ink}>{children}</text>
  </g>
);

const PriceScale = () => (
  <Drawing viewBox="1862 29 58 1006" preserveAspectRatio="none" role="img" aria-label="Price scale">
    <path d="M1862.500 29V1035" stroke="#6f8f9f" />
    <path d="M1919 29V1035" stroke="#46616f" strokeWidth="2" />
    {prices.map((p) => (
      <g key={p}>
        <path d={`M1863 ${priceY(p) + 0.5}h4`} stroke="#6f8f9f" />
        {p !== 23000 && <text x="1869" y={priceY(p) + 4} fontSize="13">{p.toLocaleString("en-US")}</text>}
      </g>
    ))}
    <PriceTag y={586} ink={BROWN} fill="#dde8fc">23,495.6</PriceTag>
    <PriceTag y={648} ink="#a00010" fill="#dde8fc">23,265.4</PriceTag>
    <PriceTag y={685} ink="#a00010" fill="#dde8fc">23,129.3</PriceTag>
    <PriceTag y={710} ink="#000" fill="#fbd000">23,039.5</PriceTag>
    <rect x="1867" y="718" width="44" height="16" fill="#90e890" />
    <text x="1869" y="731" fontSize="13">1h15m</text>
  </Drawing>
);

const DayScale = () => (
  <TimeScale viewBox="34 1035 1886 18" preserveAspectRatio="none" role="img" aria-label="Time scale">
    <path d="M34 1035H1863" stroke="#6f8f9f" strokeWidth="2" />
    <path d="M1919 1035v18" stroke="#46616f" strokeWidth="2" />
    {days.map(([d, x]) => (
      <g key={x}>
        <path d={`M${x + 0.5} 1035v3`} stroke="#6f8f9f" />
        <text x={x} y="1049" textAnchor="middle">{d}</text>
      </g>
    ))}
    {weekBreaks.map((x) => (
      <path key={x} d={`M${x + 0.5} 1035v3`} stroke="#6f8f9f" />
    ))}
  </TimeScale>
);

const Dropdown = ({ label, value }: { label: string; value: string }) => (
  <Picker>
    <PickerSelect aria-label={label} defaultValue={value}>
      <option>{value}</option>
    </PickerSelect>
    <Chevron />
  </Picker>
);

export default function TradingWorkstation() {
  return (
    <App>
      <GlobalStyle />
      <TopBar>
        <Cell $w={26}>
          <FlatButton aria-label="Chart type">
            <Icon w={18} h={20}>
              <path d="M3 7v10M9 4v14M14.500 2v12" stroke="#2f7fae" />
              <path d="M1 9h4v6H1zM7 7h4v7H7z" fill="#2f8cc0" />
              <rect x="13" y="4" width="3" height="7" fill="#b8d8f4" stroke="#2f7fae" />
            </Icon>
          </FlatButton>
        </Cell>
        <Cell $w={35}>
          <FlatButton aria-label="Link">
            <Icon w={14} h={22}>
              <rect x="4" y="1" width="6" height="8" rx="3" stroke="#667" strokeWidth="2" fill="#eee" />
              <rect x="4" y="11" width="6" height="9" rx="3" stroke="#667" strokeWidth="2" fill="#eee" />
              <path d="M7 6v8" stroke="#445" strokeWidth="2" />
              <path d="M2 16l4 4 7-8" stroke="#fff" strokeWidth="5" />
              <path d="M2 16l4 4 7-8" stroke="#1050c0" strokeWidth="2.5" />
            </Icon>
          </FlatButton>
          <FlatButton aria-label="Select range">
            <Icon w={14} h={18}>
              <path d="M1 4h12M1 1v6M13 1v6" stroke="#5078e0" strokeWidth="1.5" />
              <path d="M5 5v10l2-2 2 4 2-1-2-4h3z" stroke="#5078e0" fill="#b0ccfa" />
            </Icon>
          </FlatButton>
        </Cell>
        <Cell $w={46}><Dropdown label="Instrument" value="DAX" /></Cell>
        <Frames $w={171}>
          {["3m", "12m", "1h", "4h", "D", "W", "M"].map((t) => (
            <FrameButton key={t} $on={t === "4h"}>{t}</FrameButton>
          ))}
        </Frames>
        <Cell $w={66}><Dropdown label="Timeframe" value="4 hours" /></Cell>
        <Cell $w={59}><FrameButton>20,100U</FrameButton></Cell>
        <Cell $w={78}><Dropdown label="Units" value="10 k units" /></Cell>
        <Cell $w={95}>
          <FlatButton>
            <Icon w={22} h={22}>
              <path d="M0 7c4-8 7-5 10 0s7 5 12-2" stroke="#20a030" strokeWidth="1.6" />
              <path d="M0 11c5 1 8-7 12-7s5 7 10 6" stroke="#e02030" strokeWidth="1.6" />
              <path d="M1 15h20v6H1z" fill="#10b820" />
              <path d="M4 16h3v5H4zM10 18h3v3h-3zM15 16h3v5h-3z" fill="#e02010" />
              <path d="M1 21.500h20" stroke="#1060d0" />
            </Icon>
            Indicators
          </FlatButton>
        </Cell>
        <Cell $w={16}><FlatButton aria-label="More indicators"><Chevron /></FlatButton></Cell>
        <Instrument>
          <Icon w={14} h={14}>
            <rect x="1" y="1" width="12" height="12" fill="#eef0f4" stroke="#9098a0" />
            <path d="M7 6v5M7 3v2" stroke="#707880" strokeWidth="2" />
          </Icon>
          <span>Germany 40 Cash (E5)</span>
          <Quote>23,039.5</Quote>
          <b>23:44:00</b>
          <Dot />
        </Instrument>
        <WindowButtons>
          <FlatButton aria-label="Minimise"><Icon w={12} h={12}><path d="M1 11h10" stroke="#47688f" strokeWidth="2" /></Icon></FlatButton>
          <FlatButton aria-label="Restore"><Icon w={12} h={12}><path d="M4 4V1h7v6H8M1 5h7v6H1z" stroke="#47688f" strokeWidth="1.6" /></Icon></FlatButton>
          <FlatButton aria-label="Close"><Icon w={12} h={12}><path d="M1 1l10 10M11 1L1 11" stroke="#3f628c" strokeWidth="2.4" /></Icon></FlatButton>
        </WindowButtons>
      </TopBar>

      <Main>
        <ToolColumn>
          <StripButton aria-label="Scroll tools up"><Chevron up /></StripButton>
          {tools.map(([name, icon]) => (
            <ToolButton key={name} aria-label={name} $on={name === "Cursor" || name === "Magnet"}>{icon}</ToolButton>
          ))}
          <StripButton $raised aria-label="Scroll tools down"><Chevron /></StripButton>
          <ExtraTool aria-label="Settings">
            <Icon w={26} h={28}>
              <path d="M4 7h11l4 4v13H4z" fill="#eef2f4" stroke="#889" />
              <path d="M6 21l4-6 3 4 5-10" stroke="#d02020" />
              <path d="M11 25l6-6a4 4 0 0 1 5-5l-2 3 2 2 3-2a4 4 0 0 1-6 4l-5 6z" fill="#fff" stroke="#111" strokeWidth="1.5" />
              <circle cx="6" cy="6" r="5.500" fill="#108a18" />
              <text x="6" y="9.500" fontSize="9" textAnchor="middle" fill="#fff">1</text>
              <Corner x={22} y={25} />
            </Icon>
          </ExtraTool>
          <ExtraTool aria-label="More tools">
            <Icon w={26} h={20}>
              <circle cx="6" cy="10" r="2.200" fill="#222" />
              <circle cx="13" cy="10" r="2.200" fill="#222" />
              <circle cx="20" cy="10" r="2.200" fill="#222" />
              <Corner x={19} y={17} />
            </Icon>
          </ExtraTool>
        </ToolColumn>

        <ChartGrid>
          <Canvas>
            <Chart />
            <Note $x={960} $y={424} $w={126} $h={28} $size={15}>Posible Pullback</Note>
            <Note $x={887} $y={578} $w={172} $h={23} $size={10}>Muchas plumas y nada de fuerza</Note>
            <Note $x={633} $y={691} $w={180} $h={29} $size={15}>Soporte muy importante</Note>
            <Note $x={1282} $y={422} $w={411} $h={83} $size={15} $bg="#eef3ff">
              {"Si no valida posible dia complejo y muy erratico\ncompletamente inoperable entre la zona de los 23100\ny los 23400 fijaros todo y estar en la zona que estamos\nla diferencia de una proyeccion y otra esta a 1000 puntos"}
            </Note>
            <Note $x={1421} $y={741} $w={430} $h={65} $size={15} $bg="linear-gradient(#e3eaff 0 50px, transparent 50px)">
              {"Atencion viernes importante ya que si el precio valida\ntendremos una semana con pullback a la Genial de semanal\ny movimientops claros hacia la zona de los 22400"}
            </Note>
          </Canvas>
          <PriceScale />
          <DayScale />
        </ChartGrid>
      </Main>

      <BottomBar>
        <DrawToggle aria-label="Drawing tools">
          <Icon w={24} h={22}>
            <path d="M2 16L5 4l4 13 5-13" stroke="#444" />
            <path d="M1 3l10 11" stroke="#e01020" strokeWidth="2" />
            <path d="M3 20h9" stroke="#20b030" strokeWidth="2" />
            <path d="M18 3l4 2-6 13-4 2 1-5z" fill="#f8c820" stroke="#8a6000" />
          </Icon>
        </DrawToggle>
        <BarButton $w={28} aria-label="Share">
          <Icon w={22} h={22}>
            <path d="M15 4L4 11l11 6" stroke="#f4f8fa" strokeWidth="2.500" />
            <circle cx="14" cy="4" r="3" fill="#f4f8fa" /><circle cx="4" cy="11" r="3.500" fill="#f4f8fa" /><circle cx="13" cy="16" r="3" fill="#f4f8fa" />
            <Corner x={18} y={19} />
          </Icon>
        </BarButton>
        <BarButton $w={26} aria-label="Chat">
          <Icon w={20} h={22}>
            <path d="M1 2h7l3 3v10H1z" fill="#f6f8fa" stroke="#a0b0b8" />
            <path d="M5 8h14v9h-5l-3 4-1-4H5z" fill="#3878e0" />
            <path d="M8 12h8" stroke="#fff" strokeWidth="2" strokeDasharray="2 1" />
          </Icon>
        </BarButton>
        <BarButton $w={28} aria-label="Report">
          <Icon w={18} h={22}>
            <rect x="2" y="3" width="14" height="16" fill="#f2f2ee" stroke="#555" />
            <path d="M4 6h6M4 9h10M4 12h9M4 15h4" stroke="#444" />
            <path d="M10 3h6v5z" fill="#e02030" /><path d="M5 19l4-6 5 6z" fill="#20b030" />
          </Icon>
        </BarButton>
        <BarButton $w={26} aria-label="Order book">
          <Icon w={20} h={22}>
            <path d="M3 2h8v4H3zM1 7h10v4H1zM4 12h7v4H4zM2 17h9v4H2z" fill="#30b040" stroke="#187a28" strokeWidth=".8" />
            <path d="M11 5h6v4h-6zM11 10h8v4h-8zM11 15h5v4h-5z" fill="#e04048" stroke="#901820" strokeWidth=".8" />
          </Icon>
        </BarButton>
        <BarButton $w={26} aria-label="Windows">
          <Icon w={22} h={22}>
            <rect x="1" y="1" width="13" height="13" rx="1" fill="#fff" stroke="#1858c0" /><path d="M1 3h13" stroke="#1858c0" strokeWidth="3" />
            <path d="M3 11l3-5 3 4" stroke="#20a030" />
            <rect x="8" y="8" width="13" height="13" rx="1" fill="#fff" stroke="#1858c0" /><path d="M8 10h13" stroke="#1858c0" strokeWidth="3" />
            <path d="M10 18l3-4 3 4 3-4" stroke="#e02020" />
          </Icon>
        </BarButton>
        <BarButton $w={16} aria-label="Collapse">
          <Icon w={10} h={10}><path d="M5 0L1 5l4 5M9 0L5 5l4 5" stroke="#3e5662" /></Icon>
        </BarButton>
        <Scroll>
          <ScrollButton aria-label="Scroll left"><Icon w={6} h={8}><path d="M5 1L2 4l3 3" stroke="#000" strokeWidth="1.600" /></Icon></ScrollButton>
          <ScrollEnd>
            <Thumb />
            <ScrollButton aria-label="Scroll right"><Icon w={6} h={8}><path d="M1 1l3 3-3 3" stroke="#000" strokeWidth="1.600" /></Icon></ScrollButton>
          </ScrollEnd>
        </Scroll>
        <BarButton $w={32} aria-label="Go to date">
          <Icon w={24} h={22}>
            <rect x="5" y="3" width="16" height="15" fill="#f4f8fa" stroke="#8aa" /><path d="M5 5h16" stroke="#3090b8" strokeWidth="4" />
            <path d="M8 1v4M13 1v4M18 1v4" stroke="#1c5878" strokeWidth="1.500" />
            <path d="M8 10h11M8 13h11" stroke="#e08080" strokeDasharray="2 2" />
            <path d="M1 15l7-6v4h6v5H8v4z" fill="#40d040" stroke="#1a8a20" />
          </Icon>
        </BarButton>
        <BarButton $w={28} aria-label="Undo">
          <Icon w={20} h={20}><path d="M2 7l7-6v4c7 0 10 6 6 13 0-6-2-8-6-8v4z" fill="#2070e8" stroke="#1450b0" /></Icon>
        </BarButton>
        <BarButton $w={28} aria-label="Redo">
          <Icon w={20} h={20}><path d="M18 7l-7-6v4C4 5 1 11 5 18c0-6 2-8 6-8v4z" fill="#78a4dc" stroke="#6890c8" /></Icon>
        </BarButton>
        <BarButton $w={28} aria-label="Chart settings">
          <Icon w={22} h={22}>
            <path d="M5 9v12M17 1v20" stroke="#333" /><rect x="2" y="11" width="6" height="8" fill="#e04040" stroke="#801010" /><rect x="13" y="3" width="7" height="16" fill="#30c040" stroke="#187a28" />
            <path d="M5 19l6-7a4 4 0 0 1 3-6v4l3 1 1-3a4 4 0 0 1-4 6l-6 7z" fill="#fff" stroke="#222" />
          </Icon>
        </BarButton>
        <BarButton $w={28} aria-label="Fit zoom"><Lens><path d="M19 2v9M17 4l2-3 2 3M17 9l2 3 2-3M1 19h9M3 17l-3 2 3 2M8 17l3 2-3 2" stroke="#1030e0" strokeWidth="1.400" /></Lens></BarButton>
        <BarButton $w={28} aria-label="Zoom out"><Lens><path d="M5 8h6" stroke="#1030e0" strokeWidth="2" /></Lens></BarButton>
        <BarButton $w={28} aria-label="Zoom in"><Lens><path d="M5 8h6M8 5v6" stroke="#1030e0" strokeWidth="2" /></Lens></BarButton>
        <BarButton $w={28} aria-label="Hide panel">
          <Icon w={22} h={20}>
            <rect x="1" y="1" width="20" height="6" fill="#f4f8fa" stroke="#c8d4da" /><path d="M3 4h16" stroke="#222" strokeWidth="3" strokeDasharray="3 1" />
            <path d="M11 9v7M8 13l3 5 3-5z" stroke="#2060d0" strokeWidth="2" fill="#2060d0" />
          </Icon>
        </BarButton>
      </BottomBar>
    </App>
  );
}
